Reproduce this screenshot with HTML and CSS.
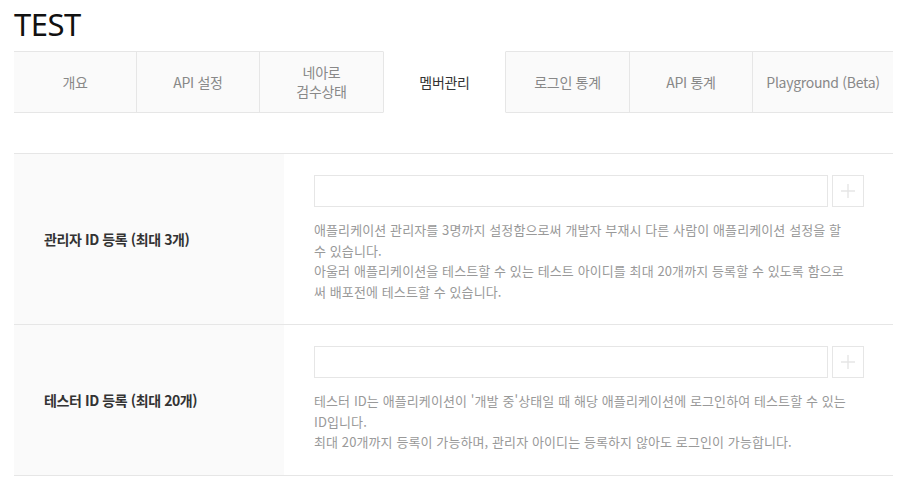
FILE: index.html
```html
<!DOCTYPE html>
<html lang="ko">
<head>
<meta charset="utf-8">
<title>TEST</title>
<link rel="stylesheet" href="styles.css">
</head>
<body>
<div class="page">
  <h1 class="title">TEST</h1>
  <ul class="tabs">
    <li class="tab">개요</li>
    <li class="tab">API 설정</li>
    <li class="tab">네아로<br>검수상태</li>
    <li class="tab active">멤버관리</li>
    <li class="tab">로그인 통계</li>
    <li class="tab">API 통계</li>
    <li class="tab">Playground (Beta)</li>
  </ul>
  <div class="form">
    <div class="row">
      <div class="label">관리자 ID 등록 (최대 3개)</div>
      <div class="field">
        <div class="input-line">
          <input class="text-input" type="text">
          <button class="add-btn" type="button"><svg width="14" height="14" viewBox="0 0 14 14"><path d="M7 0v14M0 7h14" stroke="#e6e6e6" stroke-width="1.4"/></svg></button>
        </div>
        <p class="desc">애플리케이션 관리자를 3명까지 설정함으로써 개발자 부재시 다른 사람이 애플리케이션 설정을 할 수 있습니다.<br>아울러 애플리케이션을 테스트할 수 있는 테스트 아이디를 최대 20개까지 등록할 수 있도록 함으로써 배포전에 테스트할 수 있습니다.</p>
      </div>
    </div>
    <div class="row">
      <div class="label">테스터 ID 등록 (최대 20개)</div>
      <div class="field">
        <div class="input-line">
          <input class="text-input" type="text">
          <button class="add-btn" type="button"><svg width="14" height="14" viewBox="0 0 14 14"><path d="M7 0v14M0 7h14" stroke="#e6e6e6" stroke-width="1.4"/></svg></button>
        </div>
        <p class="desc">테스터 ID는 애플리케이션이 '개발 중'상태일 때 해당 애플리케이션에 로그인하여 테스트할 수 있는 ID입니다.<br>최대 20개까지 등록이 가능하며, 관리자 아이디는 등록하지 않아도 로그인이 가능합니다.</p>
      </div>
    </div>
  </div>
</div>
</body>
</html>
```
FILE: styles.css
```css
* { box-sizing: border-box; }
html, body { margin: 0; padding: 0; background: #fff; }
body {
  font-family: "Noto Sans CJK KR", "Noto Sans", sans-serif;
  color: #333;
}
.page {
  padding: 0 22px 0 14px;
}
.title {
  margin: 0;
  padding-top: 4px;
  height: 51px;
  font-family: "Noto Sans", "Noto Sans CJK KR", sans-serif;
  font-weight: 400;
  font-size: 31px;
  line-height: 40px;
  color: #111;
  letter-spacing: -0.5px;
}
.tabs {
  list-style: none;
  margin: 0;
  padding: 0;
  display: grid;
  grid-template-columns: 122px 123px 124px 123px 123px 123px 141px;
  height: 62px;
}
.tab {
  display: flex;
  align-items: center;
  justify-content: center;
  text-align: center;
  background: #fafafa;
  border-top: 1px solid #e6e6e6;
  border-bottom: 1px solid #e6e6e6;
  border-left: 1px solid #e6e6e6;
  font-size: 14px;
  line-height: 19px;
  color: #888;
  letter-spacing: -0.3px;
}
.tab:first-child { border-left: none; }
.tab.active {
  background: #fff;
  color: #333;
  border-top-color: #fff;
  border-bottom-color: #fff;
  border-right: 1px solid #e6e6e6;
}
.tab.active + .tab { border-left: none; }
.form {
  margin-top: 40px;
  border-top: 1px solid #e6e6e6;
}
.row {
  display: grid;
  grid-template-columns: 270px 1fr;
  border-bottom: 1px solid #e6e6e6;
}
.label {
  background: #fafafa;
  display: flex;
  align-items: center;
  padding-left: 30px;
  font-size: 14px;
  font-weight: 700;
  color: #333;
  letter-spacing: -0.4px;
}
.field {
  padding: 21px 0 22px 30px;
}
.input-line {
  display: flex;
  gap: 4px;
  height: 32px;
}
.text-input {
  width: 514px;
  height: 32px;
  border: 1px solid #e6e6e6;
  margin: 0;
  padding: 0 8px;
  background: #fff;
  outline: none;
}
.add-btn {
  width: 32px;
  height: 32px;
  border: 1px solid #e6e6e6;
  background: #fff;
  padding: 0;
  margin: 0;
  display: flex;
  align-items: center;
  justify-content: center;
}
.desc {
  margin: 13px 0 0;
  width: 540px;
  font-size: 13px;
  line-height: 20.5px;
  color: #999;
  letter-spacing: 0.1px;
}
```
